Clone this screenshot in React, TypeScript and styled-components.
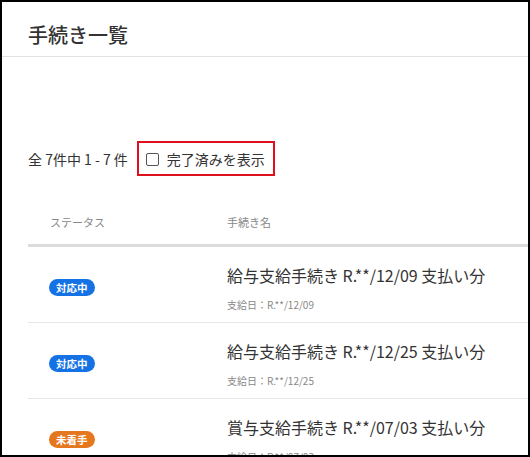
import React from "react";
import styled, { createGlobalStyle } from "styled-components";

const GlobalStyle = createGlobalStyle`
  html, body { margin: 0; padding: 0; background: #fff; }
  body { font-family: "Noto Sans CJK JP", "Noto Sans", sans-serif; color: #333; }
  * { box-sizing: border-box; }
`;

const Frame = styled.div`
  width: 530px;
  height: 457px;
  border: 2px solid #000;
  overflow: hidden;
  background: #fff;
`;

const PageHeader = styled.header`
  padding: 19px 26px 7px;
  border-bottom: 1px solid #e2e2e2;
`;

const Title = styled.h1`
  margin: 0;
  font-size: 20px;
  line-height: 28px;
  font-weight: 500;
  color: #333;
`;

const Content = styled.div`
  padding: 84px 0 0 26px;
`;

const Toolbar = styled.div`
  display: flex;
  align-items: center;
  gap: 9px;
`;

const Count = styled.span`
  font-size: 14px;
  line-height: 18px;
  color: #333;
`;

const ToggleLabel = styled.label`
  display: flex;
  align-items: center;
  gap: 8px;
  height: 35px;
  padding: 0 8px 0 7px;
  border: 2px solid #e0101c;
  font-size: 14px;
  color: #333;
  cursor: pointer;
`;

const Box = styled.span`
  width: 13px;
  height: 13px;
  border: 1px solid #555;
  border-radius: 2px;
  background: #fff;
  margin-top: 1px;
`;

const Table = styled.div`
  margin-top: 22px;
`;

const HeadRow = styled.div`
  display: grid;
  grid-template-columns: 199px 1fr;
  padding: 16px 0 14px;
  border-bottom: 3px solid #dcdcdc;
`;

const HeadCell = styled.div<{ $indent?: number }>`
  padding-left: ${(p) => p.$indent ?? 0}px;
  font-size: 11px;
  line-height: 16px;
  color: #888;
`;

const Row = styled.div`
  display: grid;
  grid-template-columns: 199px 1fr;
  align-items: center;
  height: 76px;
  border-bottom: 1px solid #e6e6e6;
`;

const StatusCell = styled.div`
  padding-left: 21px;
  padding-top: 1px;
`;

const Badge = styled.span<{ $color: string }>`
  display: inline-block;
  height: 17px;
  padding: 0 7px;
  border-radius: 9px;
  background: ${(p) => p.$color};
  color: #fff;
  font-size: 10.5px;
  font-weight: 700;
  line-height: 17px;
`;

const NameCell = styled.div`
  display: flex;
  flex-direction: column;
  gap: 12px;
  padding-top: 6px;
`;

const Name = styled.div`
  font-size: 16px;
  line-height: 22px;
  color: #333;
`;

const Sub = styled.div`
  font-size: 10px;
  line-height: 14px;
  color: #888;
`;

const rows = [
  { status: "対応中", color: "#1472e4", name: "給与支給手続き R.**/12/09 支払い分", sub: "支給日：R.**/12/09" },
  { status: "対応中", color: "#1472e4", name: "給与支給手続き R.**/12/25 支払い分", sub: "支給日：R.**/12/25" },
  { status: "未着手", color: "#e5771f", name: "賞与支給手続き R.**/07/03 支払い分", sub: "支給日：R.**/07/03" },
];

export default function App() {
  return (
    <>
      <GlobalStyle />
      <Frame>
        <PageHeader>
          <Title>手続き一覧</Title>
        </PageHeader>
        <Content>
          <Toolbar>
            <Count>全 7件中 1 - 7 件</Count>
            <ToggleLabel>
              <Box />
              完了済みを表示
            </ToggleLabel>
          </Toolbar>
          <Table>
            <HeadRow>
              <HeadCell $indent={22}>ステータス</HeadCell>
              <HeadCell>手続き名</HeadCell>
            </HeadRow>
            {rows.map((r, i) => (
              <Row key={i}>
                <StatusCell>
                  <Badge $color={r.color}>{r.status}</Badge>
                </StatusCell>
                <NameCell>
                  <Name>{r.name}</Name>
                  <Sub>{r.sub}</Sub>
                </NameCell>
              </Row>
            ))}
          </Table>
        </Content>
      </Frame>
    </>
  );
}
